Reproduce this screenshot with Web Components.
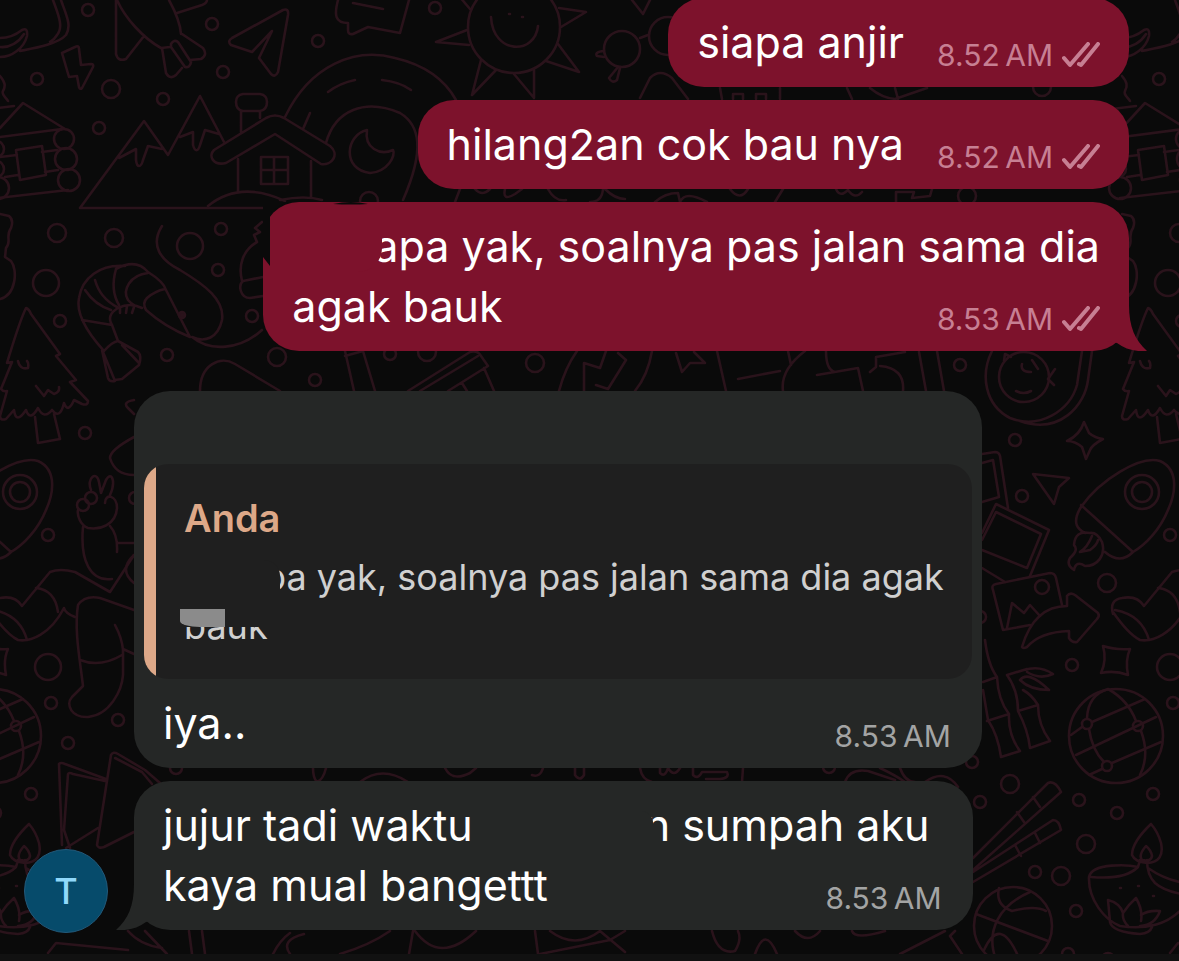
<!DOCTYPE html>
<html lang="id">
<head>
<meta charset="utf-8">
<meta name="viewport" content="width=device-width, initial-scale=1">
<title>Chat</title>
<style>
    body {
        margin: 0;
        background: #0a0a0a;
        color: #fff;
        font-family: Inter, "Liberation Sans", sans-serif;
    }
</style>
</head>
<body>

<chat-screen>
    <chat-bubble side="out" time="8.52" read>siapa anjir</chat-bubble>
    <chat-bubble side="out" time="8.52" read>hilang2an cok bau nya</chat-bubble>
    <chat-bubble side="out" time="8.53" read tail torn><chat-eraser size="wide"></chat-eraser>apa yak, soalnya pas jalan sama dia<br>agak bauk</chat-bubble>

    <chat-bubble side="in" time="8.53" class="reply">
        <chat-quote slot="quote" author="Anda"><chat-eraser size="quote"></chat-eraser>pa yak, soalnya pas jalan sama dia agak<br><chat-eraser size="smudge"></chat-eraser>bauk</chat-quote>iya..</chat-bubble>
    <chat-bubble side="in" time="8.53" tail>
        <chat-avatar slot="avatar">T</chat-avatar>jujur tadi waktu<chat-eraser size="gap"></chat-eraser>n sumpah aku&nbsp;<br>kaya mual bangettt</chat-bubble>
</chat-screen>

<script>

// doodles of the wallpaper: x, y, radius
const rings = [
    [88,10,6],[212,24,6],[318,41,6],[223,72,6],[37,79,6],[111,89,9],[163,99,6],[99,128,6],[435,8,6],
    [57,233,9],[114,238,9],[190,246,13],[221,229,6],[218,270,6],[46,283,13],[60,321,6],[252,316,6],
    [167,355,6],[277,357,9],[315,380,6],[390,354,6],[427,352,9],[535,363,9],[85,433,6],[369,201,9],
    [48,535,6],[48,667,13],[51,703,6],[118,720,6],[68,743,6],[31,794,6],[176,768,6],[135,498,6],
    [1072,665,6],[1010,784,9],[980,802,6],[1079,800,6],[1117,813,6],[1086,844,9],[1035,872,6],
    [1061,876,9],[1076,911,6],[972,762,6],[829,767,6],[1068,954,6],[1108,959,6],[960,365,6],
    [1015,440,6],[1022,496,6],[1107,583,9],[980,617,6],[1042,87,9],[967,196,9],
    [64,139,10],[66,159,11],[69,180,11],[-2,188,11],[-4,149,8],[-4,169,8],
    [514,27,46],[622,49,18],[668,36,19],
    [1142,492,17],[1142,492,10],[83,505,6],[91,498,6],
    [1116,736,47],[1087,724,5],[1138,726,5],[1107,766,5],
    [1013,926,39],[1042,587,7],[1024,377,25]
]

const strokes = [
    // fruit, bolt, smoke
    'M53 0C58 14 64 27 57 35Q54 40 50 42M61 0C66 15 72 25 66 35C58 44 35 48 20 51M0 38C10 38 17 34 22 30Q28 27 27 36C24 48 12 57 0 57M0 47C10 48 19 42 24 34',
    'M62 53L75 47Q79 45 79 49L81 65 91 64Q94 64 93 67L82 88Q80 90 79 87L77 76 69 77Z',
    'M0 76C5 82 6 86 3 91C1 95 6 97 8 101',
    // rocket going down
    'M117 0C125 18 143 38 161 48L170 47M169 0Q180 20 181 34M116 0V54Q118 62 126 59L144 36M162 48L166 73Q170 80 176 75L182 68M171 44Q174 39 178 42L191 62Q190 68 185 67L171 47ZM182 34L203 48Q208 55 201 59L190 60M177 13L202 5Q207 3 207 0',
    // paper plane, speech
    'M283 10Q289 8 288 15L278 72Q275 78 271 74L259 58 272 31 252 52 231 45Q227 41 232 38Z',
    'M338 0C334 15 335 23 348 23V30Q348 35 353 34L368 27 400 33L409 0M353 3L383 9',
    // mountains
    'M270 208H80L144 121 168 155 200 96 224 142M119 158L136 149V160C137 168 141 168 143 160L148 146 162 149M180 137L193 132V145C195 152 198 152 200 145L205 130 219 134',
    // house
    'M243 94H260Q267 95 267 102 267 110 260 111H243Q236 110 236 102 236 95 243 94ZM241 111V132M260 111V118M214 150L266 118Q275 113 284 118L330 146C340 154 332 166 321 164L275 134 226 163C213 166 208 156 214 150ZM238 159V192M311 161V198M261 157H288V184H261ZM274 157V184M261 170H288M208 206Q240 180 285 201M280 200Q305 195 322 200',
    // rainbow and moon
    'M285 117C310 65 355 47 395 58C425 65 445 80 456 100M326 143C335 110 365 98 400 113C420 125 425 150 403 200M328 92Q340 83 355 80M382 80Q400 82 411 90M303 129L310 113',
    'M367 130C345 135 342 170 370 173C388 172 396 155 393 150C380 156 364 148 367 130',
    // log cabin
    'M0 128L23 103 65 129M-10 109L14 106M-15 139L62 129M0 157L17 155M42 152L57 150M5 177L18 175M45 172L58 170M-2 198L68 190M16 150L42 146 46 175 20 180Z',
    'M0 214L9 216Q14 220 11 228C5 236 12 242 6 248L5 257 11 261C18 270 16 295 0 299',
    // shrimp
    'M104 351C85 330 76 312 79 298C82 278 100 264 125 266M116 269Q136 258 148 272Q164 282 166 290L190 337Q165 327 146 310Q142 303 147 298Q155 291 165 289M85 290Q95 305 111 310M95 280Q100 298 117 307M116 269Q110 290 119 305M148 273C130 275 122 290 128 300Q133 306 142 308Q130 302 118 308Q106 315 112 325L118 341M82 320L112 325M104 351Q112 342 118 341M102 350L108 378Q109 382 115 381L103 352M118 341L138 352Q142 356 139 365L122 379 115 380M122 345L139 363M120 308V313M127 306L126 313M134 307L132 313',
    'M162 226C150 245 160 260 180 270C205 285 225 300 222 320C218 338 205 343 192 337C210 352 240 350 262 330',
    'M257 242C243 250 238 265 242 281M263 277L243 281C238 285 240 298 250 298L263 296M257 242L254 235 260 232 255 228 262 222',
    // pine
    'M26 308Q29 309 31 314L60 354 56 356 76 380 70 382 88 401Q88 406 82 404L74 400Q68 414 64 403Q60 420 52 410Q44 420 38 408Q30 422 26 410Q16 425 14 410L6 419Q0 421 0 416L7 391Q3 392 1 389L12 362 7 363Q20 320 26 308ZM35 417L38 443 60 439 54 414M18 361Q20 370 28 368Q29 363 27 361M36 386L44 396 48 390 54 394Q60 392 59 387',
    'M200 391C200 365 220 355 235 364L280 391M134 400Q122 402 128 408L134 414M134 437Q110 450 110 458Q115 475 134 475',
    // raised hand
    'M91 490C86 478 97 470 99 482L101 493 106 480C112 470 116 482 110 495M105 503C105 493 117 495 117 508C116 525 100 530 88 528C80 525 77 515 78 510M83 527C80 560 90 582 112 579M110 526Q118 535 117 552M118 543H134M134 555Q118 570 134 583',
    // sleeve and sock
    'M-9 614Q-13 600 0 598 15 595 22 606L50 572Q60 568 75 572L110 592 134 555M36 588Q55 590 58 612M75 617Q65 613 64 608C50 635 30 642 18 640C8 635 0 625 -9 612M-7 610Q20 615 27 640',
    'M78 605Q85 595 100 598L134 610M78 605C74 630 80 660 83 686L72 697C65 705 72 718 88 717C110 715 122 690 123 675V650Q122 638 115 625M80 660Q100 668 122 655M123 649L134 654',
    // stars
    'M1084 422L1089 433Q1095 438 1103 439Q1092 445 1090 450L1086 459 1082 447Q1075 441 1067 441Q1080 435 1084 422Z',
    'M1103 646Q1115 650 1130 649Q1125 660 1128 675Q1115 670 1101 673Q1107 660 1103 646Z',
    // rocket going up
    'M1081 507C1100 480 1140 455 1160 461C1180 470 1175 495 1168 510C1160 530 1145 545 1133 552Q1120 565 1105 552M1081 507C1070 525 1080 530 1085 533M1081 505L1133 552M1090 533Q1075 530 1074 545Q1079 550 1070 558Q1066 565 1074 570Q1076 560 1085 566C1098 566 1106 555 1102 542Q1097 532 1090 533M1092 536Q1087 548 1080 552L1090 550Q1097 545 1098 540',
    // globe
    'M1092 722L1145 699M1071 735L1082 727M1076 755L1156 717M1089 775L1102 769M1112 763L1161 742M1087 718Q1088 695 1108 689Q1128 700 1136 721M1089 729Q1092 750 1104 762M1141 731Q1150 755 1140 775',
    // cards
    'M62 845L59 764Q61 762 65 764L106 779M70 848L64 830 68 774Q69 772 73 774L105 781M66 848L98 828M111 755Q113 751 118 754L145 770 160 783M111 755L97 845Q98 849 104 847L134 832M115 758L142 772 152 784',
    // chopsticks
    'M973 858L1048 783Q1055 780 1061 792L973 870M973 872L1053 820Q1059 820 1061 830L973 882M1033 797L1040 807M1017 812L1024 822M1035 833L1040 843M1015 845L1021 856',
    'M976 914L1048 941M999 888Q995 905 1012 911Q1035 905 1046 911M1030 892C1000 905 985 930 996 960M984 950Q1000 915 1018 956',
    // oil lamp
    'M1151 824Q1132 842 1132 855Q1135 862 1147 863Q1165 862 1161 843Q1158 832 1151 824ZM1146 846Q1138 855 1142 860Q1151 862 1152 856Q1151 850 1146 846ZM1138 867C1130 865 1092 862 1089 877C1088 900 1105 920 1120 926C1145 930 1170 925 1185 905L1188 895Q1165 892 1155 883 1147 875 1147 860M1091 877Q1125 880 1138 867L1140 860M1148 868Q1165 880 1185 883M1110 922L1108 900Q1120 903 1123 913Q1128 905 1136 898Q1143 910 1141 921M1123 913Q1122 920 1128 926M1141 915Q1148 910 1160 911Q1155 925 1140 926M1110 922Q1112 932 1140 934Q1150 933 1152 927M1120 888h1M1138 886h1M1153 896h1',
    // bamboo
    'M985 640Q988 665 997 677L983 682M997 677Q998 700 1009 714L987 721M1009 714Q1008 735 1020 751L1001 757Q998 735 988 720L983 690M1007 675L1027 669M1023 690Q1032 695 1038 705L1018 711Q1018 690 1007 675M1018 711Q1028 730 1030 748L1050 741Q1038 725 1038 705M1024 670Q1040 665 1053 674Q1040 680 1027 672M1020 680Q1028 670 1049 690Q1030 690 1020 680',
    // photo, arrow, frames, cursor
    'M1030 625L1003 630 993 590Q991 585 996 584L1050 573Q1055 573 1056 578L1062 605M1007 628L1012 603 1024 613 1030 605 1040 616',
    'M1022 647C1030 620 1045 606 1067 606V596Q1070 592 1075 595L1098 613Q1100 616 1097 619L1077 642Q1072 643 1069 638V631Q1040 632 1027 647Q1023 649 1022 647Z',
    'M982 454L995 452Q999 452 1000 456L1008 508M982 463L993 460 999 497 982 502M982 533L996 504 1049 530 1030 576M982 550L1027 568 1041 534 996 512 982 540M982 568L1005 582',
    'M1033 474L1069 478 1059 487 1054 504Z',
    // coin with a face
    'M992 351C980 375 985 405 1010 418C1040 430 1070 410 1077 385L1082 351M1020 421C1060 435 1085 405 1088 380L1092 351M1022 364Q1020 372 1031 372M1032 360L1038 369M1016 391Q1024 395 1031 391M1055 369L1048 379 1054 385M1004 361L1005 354 1011 357',
    // sun, glasses
    'M491 17C493 55 535 55 538 26M509 14h1M522 17h1M467 30L436 42 469 45M559 8L586 12 561 27M558 44L579 72 546 61M481 60L472 95 496 70M514 74L534 98V70M459-4L470 9',
    'M640 38L648 35M604 51Q594 52 597 56L604 57M618 67L609 78Q612 84 617 80L620 68M632 0L643 14 650 0',
    // bits seen between the bubbles
    'M640 98L650 78Q660 68 672 78L688 99M720 88L722 99M733 99V94H743V99M756 99V94H766V99M780 88V99M847 88L852 99M870 88Q882 98 895 99L927 88M895 88L898 99',
    'M455 202L460 189M475 189Q482 197 490 189M505 189Q502 202 515 194L522 189M548 189Q555 202 566 200M603 189Q602 202 590 202M605 189Q615 199 625 199M655 202Q665 193 678 193L680 202Q685 190 707 202M730 189Q740 202 748 189M775 202L783 189M836 189Q840 198 848 190Q855 200 862 192M896 202V192H914L912 198 930 196 932 189',
    'M345 351L354 391M345 356L363 351 375 391M408 391L470 352Q478 350 481 356L488 366 448 391M420 391L478 356M484 368L494 391M462 383L467 391M559 391Q565 368 577 351M584 391V363L600 368 606 351M618 353L626 360 608 389 596 385M652 351Q648 375 635 391M676 353L682 372 690 363 705 363 694 352M717 351L726 391M738 379L780 371M788 351L791 365M805 351Q780 370 783 391M826 351Q826 370 835 372M817 375L858 368 863 391M870 372L876 367V357L905 352M880 366Q905 368 903 391M919 352L926 391M937 351L944 391',
    'M313 768Q313 778 317 782 323 780 326 768M360 782Q382 765 408 782M445 768Q452 782 470 773L476 768M532 775Q540 778 543 768M575 768V775Q580 782 584 775V768M640 768Q642 780 652 782M660 768V773Q665 778 668 768 674 778 680 768M693 768V775Q698 780 702 772H727Q730 778 720 779H706M743 768L742 782M845 782Q850 768 868 771L895 780M880 768Q895 775 905 782M900 768Q905 782 915 782M925 782Q945 768 958 787',
    'M128 931Q140 945 162 948M145 931L167 954M189 931L192 954M202 931L205 954M48 953L56 943 128 950M273 954Q280 940 290 933M290 954Q280 940 304 934M340 954Q370 945 390 931M413 931L409 954M415 931Q440 965 476 931M535 931L538 954M550 931Q575 950 600 931M600 931L625 952M540 954L610 940 625 931M712 931Q718 955 735 951 742 940 738 931M755 954Q765 925 777 954M795 931Q808 945 820 931M852 931Q855 940 885 931M900 954L945 931M955 931L950 936 962 954'
]

class ChatWallpaper extends HTMLElement {

    constructor(){
        super();

        const circles = rings.map(([x, y, r]) => `<circle cx="${x}" cy="${y}" r="${r}"/>`).join('');
        const paths = strokes.map(d => `<path d="${d}"/>`).join('');

        this.attachShadow({mode: 'open'}).innerHTML = `
            <style>
                :host {
                    display: block;
                    overflow: hidden;
                    background: #0a0a0a;
                }
                svg {
                    display: block;
                    width: 100%;
                    height: 100%;
                }
                #doodles {
                    fill: none;
                    stroke: #2a131b;
                    stroke-width: 2.6;
                    stroke-linecap: round;
                    stroke-linejoin: round;
                }
            </style>
            <svg aria-hidden="true">
                <defs><g id="doodles">${circles}${paths}<circle cx="182" cy="315" r="3" fill="#2a131b"/></g></defs>
                <use href="#doodles"/>
                <use href="#doodles" x="-1122"/>
                <use href="#doodles" x="1122"/>
            </svg>`;
    }
}

class ChatScreen extends HTMLElement {

    constructor(){
        super();

        this.attachShadow({mode: 'open'}).innerHTML = `
            <style>
                :host {
                    display: flex;
                    flex-direction: column;
                    position: relative;
                    height: 100vh;
                    overflow: hidden;
                }
                chat-wallpaper {
                    position: absolute;
                    inset: 0;
                }
                main {
                    position: relative;
                    flex: 1;
                    min-height: 0;
                    display: flex;
                    flex-direction: column;
                    justify-content: flex-end;
                    gap: 13px;
                    padding: 0 50px 24px 24px;
                }
                footer {
                    position: relative;
                    height: 7px;
                    background: #111;
                }
                ::slotted(.reply) {
                    margin-top: 27px;
                }
            </style>
            <chat-wallpaper></chat-wallpaper>
            <main><slot></slot></main>
            <footer></footer>`;
    }
}

const bubbleTemplate = document.createElement('template');
bubbleTemplate.innerHTML = `
    <style>
        :host {
            display: flex;
            align-items: flex-end;
            gap: 26px;
            flex: none;
            --fill: #252726;
            --muted: #a3a4a4;
            --meta-space: 149px;
        }
        :host([side="out"]) {
            justify-content: flex-end;
            --fill: #7d122c;
            --muted: #c77f93;
            --meta-space: 196px;
        }
        .side {
            width: 84px;
            flex: none;
        }
        :host([side="out"]) .side {
            display: none;
        }
        .bubble {
            position: relative;
            background: var(--fill);
            border-radius: 36px;
        }
        .body {
            display: grid;
            padding: 14px 31px 15px 29px;
        }
        :host([side="out"]) .body {
            padding-right: 29px;
        }
        .text, .meta {
            grid-area: 1 / 1;
        }
        .text {
            margin: 0;
            font-size: 43px;
            line-height: 60px;
        }
        .text::after {
            content: "";
            display: inline-block;
            width: var(--meta-space);
        }
        .meta {
            place-self: end;
            display: flex;
            align-items: center;
            gap: 9px;
            font-size: 30px;
            line-height: 34px;
            color: var(--muted);
        }
        .ticks {
            width: 38px;
            height: 26px;
            fill: none;
            stroke: currentColor;
            stroke-width: 4;
            stroke-linecap: round;
            stroke-linejoin: round;
        }
        .tail {
            position: absolute;
            bottom: 0;
            width: 40px;
            height: 60px;
            fill: var(--fill);
            left: -18px;
        }
        :host([side="out"]) .tail {
            left: auto;
            right: -18px;
            transform: scaleX(-1);
        }
        .tear {
            position: absolute;
            top: 0;
            left: 0;
            width: 120px;
            height: 70px;
            fill: #0a0a0a;
        }
        :host(:not([tail])) .tail, :host(:not([torn])) .tear, :host(:not([read])) .ticks {
            display: none;
        }
    </style>
    <div class="side"><slot name="avatar"></slot></div>
    <div class="bubble">
        <svg class="tail" viewBox="0 0 40 60" aria-hidden="true"><path d="M18 0V14C18 36 12 49 0 60C12 61 22 58 30 52L40 50V0Z"/></svg>
        <svg class="tear" viewBox="0 0 120 70" aria-hidden="true"><path d="M0 0H26C18 2 12 7 7 11V64L0 55ZM70 2Q88-2 105 2Q88 3 70 2Z"/></svg>
        <slot name="quote"></slot>
        <div class="body">
            <p class="text"><slot></slot></p>
            <div class="meta">
                <time></time>
                <svg class="ticks" viewBox="0 0 38 26" aria-hidden="true"><path d="M2 16L8 23 26 2M17 22L19 23 36 2"/></svg>
            </div>
        </div>
    </div>`;

class ChatBubble extends HTMLElement {

    constructor(){
        super();

        this.attachShadow({mode: 'open'}).appendChild(bubbleTemplate.content.cloneNode(true));
    }

    static get observedAttributes(){
        return ['time']
    }
    attributeChangedCallback(attr, oldValue, newValue) {
        this.shadowRoot.querySelector('time').textContent = newValue + '\u2009AM';
    }
}

class ChatQuote extends HTMLElement {

    constructor(){
        super();

        this.attachShadow({mode: 'open'}).innerHTML = `
            <style>
                :host {
                    display: block;
                    padding: 73px 10px 0;
                    --fill: #1f1f1f;
                }
                blockquote {
                    margin: 0;
                    padding: 30px 28px 28px 40px;
                    border-radius: 24px;
                    background: linear-gradient(to right, #dda888 12px, var(--fill) 12px);
                    font-size: 36px;
                    line-height: 49px;
                    color: #d0d0d0;
                }
                cite {
                    display: block;
                    margin-bottom: 10px;
                    font-size: 38px;
                    font-style: normal;
                    font-weight: 600;
                    color: #dda888;
                }
                p {
                    margin: 0;
                }
            </style>
            <blockquote>
                <cite></cite>
                <p><slot></slot></p>
            </blockquote>`;
    }

    static get observedAttributes(){
        return ['author']
    }
    attributeChangedCallback(attr, oldValue, newValue) {
        this.shadowRoot.querySelector('cite').textContent = newValue;
    }
}

// paints over a part of the line in the colour of the bubble
class ChatEraser extends HTMLElement {

    constructor(){
        super();

        this.attachShadow({mode: 'open'}).innerHTML = `
            <style>
                :host {
                    display: inline-block;
                    position: relative;
                    height: 40px;
                    vertical-align: -10px;
                }
                span {
                    position: absolute;
                    inset: 0 -8px 0 0;
                    background: var(--fill);
                }
                :host([size="wide"]) {
                    width: 82px;
                }
                :host([size="wide"]) span {
                    right: -8px;
                    border-radius: 0 0 24px 0;
                }
                :host([size="quote"]) {
                    width: 80px;
                }
                :host([size="quote"]) span {
                    right: -16px;
                    border-radius: 0 16px 0 0;
                }
                :host([size="gap"]) {
                    width: 172px;
                }
                :host([size="gap"]) span {
                    border-radius: 0 12px 0 0;
                }
                :host([size="smudge"]) {
                    width: 0;
                }
                :host([size="smudge"]) span {
                    inset: 0 auto auto -4px;
                    width: 96px;
                    height: 18px;
                }
                :host([size="smudge"]) span::after {
                    content: "";
                    display: block;
                    width: 45px;
                    height: 18px;
                    background: #8b8b8b;
                    border-radius: 0 0 0 20px / 0 0 0 6px;
                }
            </style>
            <span></span>`;
    }
}

class ChatAvatar extends HTMLElement {

    constructor(){
        super();

        this.attachShadow({mode: 'open'}).innerHTML = `
            <style>
                :host {
                    display: grid;
                    place-items: center;
                    box-sizing: border-box;
                    width: 84px;
                    height: 84px;
                    margin-bottom: -3px;
                    border: 1px solid #22597a;
                    border-radius: 50%;
                    background: #064b6b;
                    color: #90d8fa;
                    font-size: 36px;
                    font-weight: 500;
                    line-height: 44px;
                }
            </style>
            <slot></slot>`;
    }
}

window.customElements.define("chat-wallpaper", ChatWallpaper);
window.customElements.define("chat-screen", ChatScreen);
window.customElements.define("chat-eraser", ChatEraser);
window.customElements.define("chat-avatar", ChatAvatar);
window.customElements.define("chat-quote", ChatQuote);
window.customElements.define("chat-bubble", ChatBubble);

</script>
</body>
</html>
